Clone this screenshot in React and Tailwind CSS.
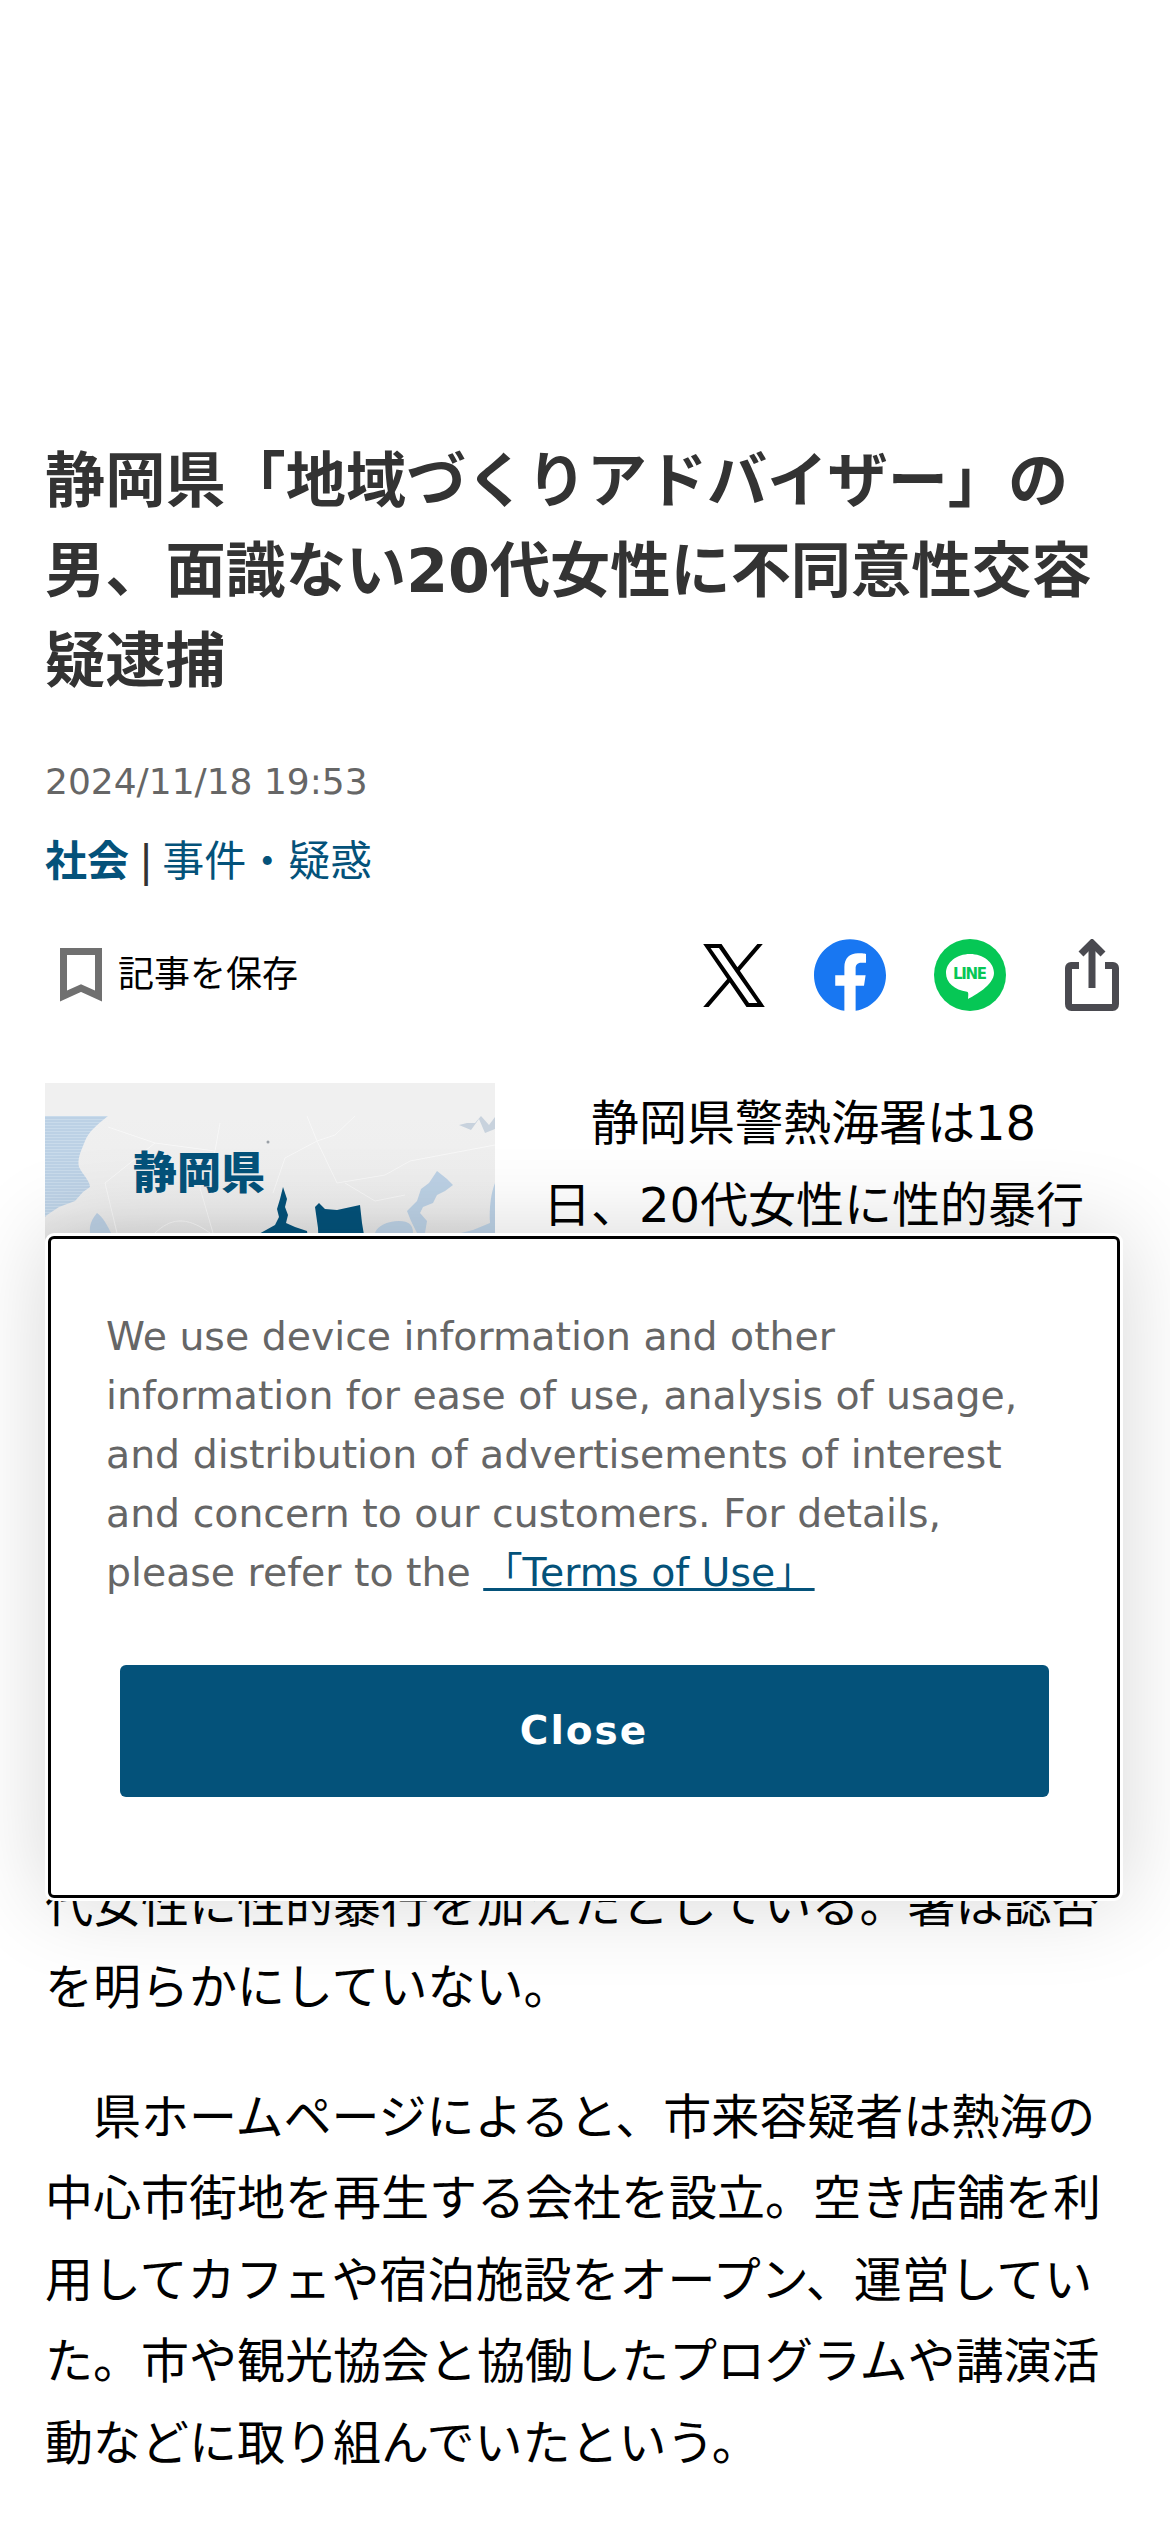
const BLUE = '#04527a'

function MapImage() {
  return (
    <svg viewBox="0 0 450 338" className="block h-[338px] w-[450px]">
      <defs>
        <linearGradient id="land" x1="0" y1="0" x2="0" y2="1">
          <stop offset="0" stopColor="#f0f0f0" />
          <stop offset="0.3" stopColor="#ededed" />
          <stop offset="0.4" stopColor="#e2e2e2" />
          <stop offset="1" stopColor="#d0d0d0" />
        </linearGradient>
        <pattern id="sea" width="4" height="3" patternUnits="userSpaceOnUse">
          <rect width="4" height="3" fill="#bcd1e5" />
          <rect width="4" height="1" fill="#c9dbeb" />
        </pattern>
      </defs>
      <rect width="450" height="338" fill="#f0f0f0" />
      <rect y="33" width="450" height="305" fill="url(#land)" />
      <path d="M0 33L63 33C52 42 44 48 40 58C36 68 32 76 34 84C38 92 45 98 45 104L38 109L30 118L14 124L2 132L0 134Z" fill="url(#sea)" />
      <path d="M45 150C44 142 47 136 52 130C58 134 62 142 66 150Z" fill="#bcd0e4" />
      <path d="M392 88L402 96L408 102L400 108L392 112L388 120L378 124L375 130L382 138L380 150L372 150L366 138L362 128L372 118L376 106L384 100Z" fill="#bcd1e5" />
      <path d="M330 150C332 143 342 138 354 138C364 138 368 142 368 150Z" fill="#bcd1e5" />
      <path d="M450 100C446 110 444 125 445 140L428 147L416 150L450 150Z" fill="#bcd1e5" />
      <path d="M414 42L426 47L434 36L440 50L450 46L450 34L444 42L436 33L430 40L422 40Z" fill="#c8d2dd" />
      <g fill="none" stroke="#fafafa" strokeWidth="1" opacity="0.8">
        <path d="M63 44L110 60L170 68L175 40" />
        <path d="M170 68L155 105L168 150" />
        <path d="M262 33L272 58L240 75L228 110" />
        <path d="M272 58L292 100L340 92L365 78L450 62" />
        <path d="M300 100L330 118L360 112" />
        <path d="M310 33L290 52L272 58" />
        <path d="M72 150L60 100L110 60" />
        <path d="M110 150C125 136 140 132 165 150" />
      </g>
      <circle cx="223" cy="59" r="1.500" fill="#9aa0a6" />
      <text
        x="88"
        y="106"
        fill={BLUE}
        fontSize="44"
        fontWeight="900"
        textLength="132"
        fontFamily="'Noto Sans CJK JP', sans-serif"
      >
        静岡県
      </text>
      <path d="M238 104L242 116L240 124L243 132L241 140L250 144L262 148L265 170L205 170L212 152L230 142L234 134L232 126L235 116Z" fill={BLUE} />
      <path d="M270 124L274 120L280 126L292 127L315 122L317 140L322 170L274 170L273 145Z" fill={BLUE} />
    </svg>
  )
}

function Bookmark() {
  return (
    <svg viewBox="0 0 42 54" className="h-[54px] w-[42px]">
      <path d="M3.500 3.500H38.500V48L21 40L3.500 48Z" fill="none" stroke="#707070" strokeWidth="7" />
    </svg>
  )
}

function XLogo() {
  return (
    <svg viewBox="0 0 1200 1227" className="h-[63px] w-[62px]">
      <path d="M714.163 519.284L1160.89 0H1055.03L667.137 450.887L357.328 0H0L468.492 681.821L0 1226.37H105.866L515.491 750.218L842.672 1226.37H1200L714.137 519.284H714.163ZM569.165 687.828L521.697 619.934L144.011 79.6944H306.615L611.412 515.685L658.88 583.579L1055.08 1150.3H892.476L569.165 687.854V687.828Z" fill="#000" />
    </svg>
  )
}

function Facebook() {
  return (
    <svg viewBox="0 0 24 24" className="h-[72px] w-[72px]">
      <path d="M24 12.073c0-6.627-5.373-12-12-12s-12 5.373-12 12c0 5.990 4.388 10.954 10.125 11.854v-8.385H7.078v-3.470h3.047V9.430c0-3.007 1.792-4.669 4.533-4.669 1.312 0 2.686.235 2.686.235v2.953H15.830c-1.491 0-1.956.925-1.956 1.874v2.250h3.328l-.532 3.470h-2.796v8.385C19.612 23.027 24 18.062 24 12.073z" fill="#1877f2" />
    </svg>
  )
}

function Line() {
  return (
    <svg viewBox="0 0 72 72" className="h-[72px] w-[72px]">
      <circle cx="36" cy="36" r="36" fill="#06c755" />
      <path d="M36 15C22.700 15 12 23.500 12 34C12 43.500 20.500 51 33 52.800C34.500 53 34.500 55 34 60C40 57 60 46 60 34C60 23.500 49.300 15 36 15Z" fill="#fff" />
      <text
        x="36"
        y="40"
        textAnchor="middle"
        fill="#06c755"
        fontSize="15"
        fontWeight="700"
        textLength="34"
        fontFamily="'DejaVu Sans', sans-serif"
      >
        LINE
      </text>
    </svg>
  )
}

function Share() {
  return (
    <svg viewBox="0 0 54 72" className="h-[72px] w-[54px]" fill="none" stroke="#4a4a50" strokeWidth="7">
      <path d="M14 26.500H6C4.500 26.500 3.500 27.500 3.500 29V65C3.500 67 4.500 68.500 6.500 68.500H47.500C49.500 68.500 50.500 67 50.500 65V29C50.500 27.500 49.500 26.500 48 26.500H40" />
      <path d="M27 49V4" />
      <path d="M16 15L27 4L38 15" />
    </svg>
  )
}

function CookieNotice() {
  return (
    <div className="absolute left-[45px] top-[1233px] w-[1078px] rounded-[9px] bg-white p-[3px] shadow-[0_0_90px_rgba(0,0,0,0.16)]">
      <div className="h-[662px] rounded-[6px] border-[3px] border-black px-[55px] pt-[68px]">
        <p className="text-[39.4px] leading-[59px] text-[#666]">
          We use device information and other
          <br />
          information for ease of use, analysis of usage,
          <br />
          and distribution of advertisements of interest
          <br />
          and concern to our customers. For details,
          <br />
          please refer to the <a className="text-[#04527a] underline">「Terms of Use」</a>
        </p>
        <button className="mx-auto mt-[63px] flex h-[132px] w-[929px] items-center justify-center rounded-[6px] bg-[#04527a] text-[39px] font-bold tracking-[2px] text-white">
          Close
        </button>
      </div>
    </div>
  )
}

export default function App() {
  return (
    <div className="relative h-[2532px] overflow-hidden bg-white px-[45px] font-['DejaVu_Sans','Noto_Sans_CJK_JP',sans-serif]">
      <div className="h-[436px]" />

      <h1 className="text-[60.2px] font-bold leading-[90px] text-[#333]">
        静岡県「地域づくりアドバイザー」の男、面識ない20代女性に不同意性交容疑逮捕
      </h1>

      <div className="mt-[47px] text-[36px] leading-[58px] text-[#666]">2024/11/18 19:53</div>

      <div className="mt-[19px] text-[42px] leading-[63px] text-[#333]">
        <a className="font-bold text-[#04527a]">社会</a>
        <span className="ml-[10px] mr-[9px]">|</span>
        <a className="text-[#04527a]">事件・疑惑</a>
      </div>

      <div className="mt-[46px] flex h-[72px] items-center">
        <div className="ml-[15px] flex items-center gap-[16px]">
          <Bookmark />
          <span className="text-[36px] text-black">記事を保存</span>
        </div>
        <div className="ml-auto mr-[6px] flex items-center">
          <XLogo />
          <div className="ml-[49px]">
            <Facebook />
          </div>
          <div className="ml-[48px]">
            <Line />
          </div>
          <div className="ml-[59px]">
            <Share />
          </div>
        </div>
      </div>

      <div className="mt-[72px] text-[48px] leading-[81.6px] text-black">
        <div className="float-left mb-[30px] mr-[48px]">
          <MapImage />
        </div>
        <p className="indent-[48px]">
          静岡県警熱海署は18日、20代女性に性的暴行を加えたとして、不同意性交容疑で静岡県熱海市、会社役員の男を逮捕した。
        </p>
        <p className="mt-[48px] clear-left indent-[48px]">
          発表によると、市来容疑者は今年、静岡県内の施設などで、面識のない女性に声をかけたうえで、同意がないまま別の場所へ連れて行き、当時20
          <br />
          代女性に性的暴行を加えたとしている。署は認否を明らかにしていない。
        </p>
        <p className="mt-[48px] indent-[48px]">
          県ホームページによると、市来容疑者は熱海の中心市街地を再生する会社を設立。空き店舗を利用してカフェや宿泊施設をオープン、運営していた。市や観光協会と協働したプログラムや講演活動などに取り組んでいたという。
        </p>
      </div>

      <CookieNotice />
    </div>
  )
}
